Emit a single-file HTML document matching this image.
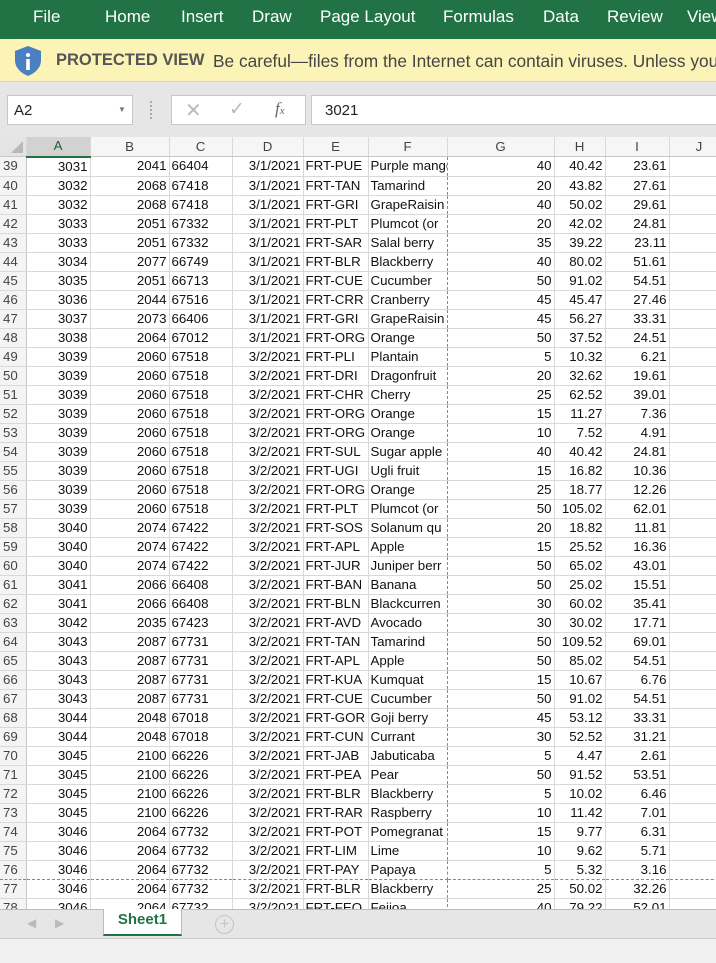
<!DOCTYPE html>
<html><head><meta charset="utf-8"><style>
*{margin:0;padding:0;box-sizing:border-box}
body{width:716px;height:963px;overflow:hidden;background:#e6e6e6;font-family:"Liberation Sans",sans-serif;position:relative}
#rib{position:absolute;left:0;top:0;width:716px;height:39px;background:#217346;color:#fff;font-size:17px}
#rib span{position:absolute;top:7px;white-space:nowrap}
#pv{position:absolute;left:0;top:39px;width:716px;height:43px;background:#fcf4b6;border-bottom:1px solid #e0d8a0;font-size:17.3px;color:#444;white-space:nowrap;overflow:hidden}
#pv b{position:absolute;left:56px;top:12px;font-weight:bold;color:#555;font-size:16.5px}
#pv span{position:absolute;left:213px;top:12px}
.box{position:absolute;background:#fff;border:1px solid #c6c6c6;top:95px;height:30px}
#grid{position:absolute;left:0;top:137px;width:716px;height:772px;overflow:hidden;background:#fff}
table{border-collapse:collapse;table-layout:fixed;font-size:13.3px;color:#111;width:729px}
td{height:19px;border-right:1px solid #d9d9d9;border-bottom:1px solid #d9d9d9;white-space:nowrap;overflow:hidden;padding:0 2px;text-align:right;line-height:18px}
td.l{text-align:left}
td.h{background:#f4f4f4;color:#444;text-align:left;padding-left:3px;border-right:1px solid #c8c8c8}
tr.hd td{background:#f6f6f6;text-align:center;color:#444;height:19px;border-bottom:1px solid #c8c8c8}
td.f{border-right:1px dashed #888}
tr.pb td{border-bottom:1px dashed #888}
#tabs{position:absolute;left:0;top:909px;width:716px;height:29px;background:#e6e6e6;border-top:1px solid #bbb}
#bot{position:absolute;left:0;top:938px;width:716px;height:25px;background:#f0f0f0;border-top:1px solid #c8c8c8}
</style></head><body>
<div id="rib"><span style="left:33px">File</span><span style="left:105px">Home</span><span style="left:181px">Insert</span><span style="left:252px">Draw</span><span style="left:320px">Page Layout</span><span style="left:443px">Formulas</span><span style="left:543px">Data</span><span style="left:607px">Review</span><span style="left:687px">View</span></div>
<div id="pv"><svg style="position:absolute;left:13px;top:6px" width="30" height="32" viewBox="0 0 30 32"><path d="M15 1 L28 6 V15 C28 23 22 28 15 31 C8 28 2 23 2 15 V6 Z" fill="#4a7fc1"/><circle cx="15" cy="10" r="2" fill="#fff"/><rect x="13.2" y="14" width="3.6" height="11" fill="#fff"/></svg><b>PROTECTED VIEW</b><span>Be careful—files from the Internet can contain viruses. Unless you</span></div>
<div class="box" style="left:7px;width:126px"><span style="position:absolute;left:6px;top:6px;font-size:15px;color:#222">A2</span><span style="position:absolute;left:110px;top:9px;font-size:8px;color:#777">▼</span></div>
<div style="position:absolute;left:150px;top:101px;width:2px;height:18px;border-left:2px dotted #aaa"></div>
<div class="box" style="left:171px;width:135px"><span style="position:absolute;left:13px;top:2px;font-size:20px;color:#bbb">✕</span><span style="position:absolute;left:57px;top:2px;font-size:19px;color:#bbb">✓</span><span style="position:absolute;left:103px;top:3px;font-size:17px;color:#666;font-style:italic;font-family:'Liberation Serif',serif">f<small style="font-size:11px">x</small></span></div>
<div class="box" style="left:311px;width:410px"><span style="position:absolute;left:13px;top:6px;font-size:15px;color:#222">3021</span></div>
<div id="grid"><table>
<colgroup><col style="width:26px"><col style="width:64px"><col style="width:79px"><col style="width:63px"><col style="width:71px"><col style="width:65px"><col style="width:79px"><col style="width:107px"><col style="width:51px"><col style="width:64px"><col style="width:60px"></colgroup>
<tr class="hd"><td style="background:#e4e4e4"><svg width="14" height="14" style="position:relative;top:3px;left:4px"><path d="M13 1V13H1Z" fill="#b8b8b8"/></svg></td><td style="background:#d2d2d2;border-bottom:2px solid #217346;color:#1e5e38">A</td><td>B</td><td>C</td><td>D</td><td>E</td><td>F</td><td>G</td><td>H</td><td>I</td><td>J</td></tr>
<tr><td class="h">39</td><td>3031</td><td>2041</td><td class="l">66404</td><td>3/1/2021</td><td class="l">FRT-PUE</td><td class="l f">Purple mango</td><td>40</td><td>40.42</td><td>23.61</td><td></td></tr>
<tr><td class="h">40</td><td>3032</td><td>2068</td><td class="l">67418</td><td>3/1/2021</td><td class="l">FRT-TAN</td><td class="l f">Tamarind</td><td>20</td><td>43.82</td><td>27.61</td><td></td></tr>
<tr><td class="h">41</td><td>3032</td><td>2068</td><td class="l">67418</td><td>3/1/2021</td><td class="l">FRT-GRI</td><td class="l f">GrapeRaisin</td><td>40</td><td>50.02</td><td>29.61</td><td></td></tr>
<tr><td class="h">42</td><td>3033</td><td>2051</td><td class="l">67332</td><td>3/1/2021</td><td class="l">FRT-PLT</td><td class="l f">Plumcot (or</td><td>20</td><td>42.02</td><td>24.81</td><td></td></tr>
<tr><td class="h">43</td><td>3033</td><td>2051</td><td class="l">67332</td><td>3/1/2021</td><td class="l">FRT-SAR</td><td class="l f">Salal berry</td><td>35</td><td>39.22</td><td>23.11</td><td></td></tr>
<tr><td class="h">44</td><td>3034</td><td>2077</td><td class="l">66749</td><td>3/1/2021</td><td class="l">FRT-BLR</td><td class="l f">Blackberry</td><td>40</td><td>80.02</td><td>51.61</td><td></td></tr>
<tr><td class="h">45</td><td>3035</td><td>2051</td><td class="l">66713</td><td>3/1/2021</td><td class="l">FRT-CUE</td><td class="l f">Cucumber</td><td>50</td><td>91.02</td><td>54.51</td><td></td></tr>
<tr><td class="h">46</td><td>3036</td><td>2044</td><td class="l">67516</td><td>3/1/2021</td><td class="l">FRT-CRR</td><td class="l f">Cranberry</td><td>45</td><td>45.47</td><td>27.46</td><td></td></tr>
<tr><td class="h">47</td><td>3037</td><td>2073</td><td class="l">66406</td><td>3/1/2021</td><td class="l">FRT-GRI</td><td class="l f">GrapeRaisin</td><td>45</td><td>56.27</td><td>33.31</td><td></td></tr>
<tr><td class="h">48</td><td>3038</td><td>2064</td><td class="l">67012</td><td>3/1/2021</td><td class="l">FRT-ORG</td><td class="l f">Orange</td><td>50</td><td>37.52</td><td>24.51</td><td></td></tr>
<tr><td class="h">49</td><td>3039</td><td>2060</td><td class="l">67518</td><td>3/2/2021</td><td class="l">FRT-PLI</td><td class="l f">Plantain</td><td>5</td><td>10.32</td><td>6.21</td><td></td></tr>
<tr><td class="h">50</td><td>3039</td><td>2060</td><td class="l">67518</td><td>3/2/2021</td><td class="l">FRT-DRI</td><td class="l f">Dragonfruit</td><td>20</td><td>32.62</td><td>19.61</td><td></td></tr>
<tr><td class="h">51</td><td>3039</td><td>2060</td><td class="l">67518</td><td>3/2/2021</td><td class="l">FRT-CHR</td><td class="l f">Cherry</td><td>25</td><td>62.52</td><td>39.01</td><td></td></tr>
<tr><td class="h">52</td><td>3039</td><td>2060</td><td class="l">67518</td><td>3/2/2021</td><td class="l">FRT-ORG</td><td class="l f">Orange</td><td>15</td><td>11.27</td><td>7.36</td><td></td></tr>
<tr><td class="h">53</td><td>3039</td><td>2060</td><td class="l">67518</td><td>3/2/2021</td><td class="l">FRT-ORG</td><td class="l f">Orange</td><td>10</td><td>7.52</td><td>4.91</td><td></td></tr>
<tr><td class="h">54</td><td>3039</td><td>2060</td><td class="l">67518</td><td>3/2/2021</td><td class="l">FRT-SUL</td><td class="l f">Sugar apple</td><td>40</td><td>40.42</td><td>24.81</td><td></td></tr>
<tr><td class="h">55</td><td>3039</td><td>2060</td><td class="l">67518</td><td>3/2/2021</td><td class="l">FRT-UGI</td><td class="l f">Ugli fruit</td><td>15</td><td>16.82</td><td>10.36</td><td></td></tr>
<tr><td class="h">56</td><td>3039</td><td>2060</td><td class="l">67518</td><td>3/2/2021</td><td class="l">FRT-ORG</td><td class="l f">Orange</td><td>25</td><td>18.77</td><td>12.26</td><td></td></tr>
<tr><td class="h">57</td><td>3039</td><td>2060</td><td class="l">67518</td><td>3/2/2021</td><td class="l">FRT-PLT</td><td class="l f">Plumcot (or</td><td>50</td><td>105.02</td><td>62.01</td><td></td></tr>
<tr><td class="h">58</td><td>3040</td><td>2074</td><td class="l">67422</td><td>3/2/2021</td><td class="l">FRT-SOS</td><td class="l f">Solanum qu</td><td>20</td><td>18.82</td><td>11.81</td><td></td></tr>
<tr><td class="h">59</td><td>3040</td><td>2074</td><td class="l">67422</td><td>3/2/2021</td><td class="l">FRT-APL</td><td class="l f">Apple</td><td>15</td><td>25.52</td><td>16.36</td><td></td></tr>
<tr><td class="h">60</td><td>3040</td><td>2074</td><td class="l">67422</td><td>3/2/2021</td><td class="l">FRT-JUR</td><td class="l f">Juniper berr</td><td>50</td><td>65.02</td><td>43.01</td><td></td></tr>
<tr><td class="h">61</td><td>3041</td><td>2066</td><td class="l">66408</td><td>3/2/2021</td><td class="l">FRT-BAN</td><td class="l f">Banana</td><td>50</td><td>25.02</td><td>15.51</td><td></td></tr>
<tr><td class="h">62</td><td>3041</td><td>2066</td><td class="l">66408</td><td>3/2/2021</td><td class="l">FRT-BLN</td><td class="l f">Blackcurren</td><td>30</td><td>60.02</td><td>35.41</td><td></td></tr>
<tr><td class="h">63</td><td>3042</td><td>2035</td><td class="l">67423</td><td>3/2/2021</td><td class="l">FRT-AVD</td><td class="l f">Avocado</td><td>30</td><td>30.02</td><td>17.71</td><td></td></tr>
<tr><td class="h">64</td><td>3043</td><td>2087</td><td class="l">67731</td><td>3/2/2021</td><td class="l">FRT-TAN</td><td class="l f">Tamarind</td><td>50</td><td>109.52</td><td>69.01</td><td></td></tr>
<tr><td class="h">65</td><td>3043</td><td>2087</td><td class="l">67731</td><td>3/2/2021</td><td class="l">FRT-APL</td><td class="l f">Apple</td><td>50</td><td>85.02</td><td>54.51</td><td></td></tr>
<tr><td class="h">66</td><td>3043</td><td>2087</td><td class="l">67731</td><td>3/2/2021</td><td class="l">FRT-KUA</td><td class="l f">Kumquat</td><td>15</td><td>10.67</td><td>6.76</td><td></td></tr>
<tr><td class="h">67</td><td>3043</td><td>2087</td><td class="l">67731</td><td>3/2/2021</td><td class="l">FRT-CUE</td><td class="l f">Cucumber</td><td>50</td><td>91.02</td><td>54.51</td><td></td></tr>
<tr><td class="h">68</td><td>3044</td><td>2048</td><td class="l">67018</td><td>3/2/2021</td><td class="l">FRT-GOR</td><td class="l f">Goji berry</td><td>45</td><td>53.12</td><td>33.31</td><td></td></tr>
<tr><td class="h">69</td><td>3044</td><td>2048</td><td class="l">67018</td><td>3/2/2021</td><td class="l">FRT-CUN</td><td class="l f">Currant</td><td>30</td><td>52.52</td><td>31.21</td><td></td></tr>
<tr><td class="h">70</td><td>3045</td><td>2100</td><td class="l">66226</td><td>3/2/2021</td><td class="l">FRT-JAB</td><td class="l f">Jabuticaba</td><td>5</td><td>4.47</td><td>2.61</td><td></td></tr>
<tr><td class="h">71</td><td>3045</td><td>2100</td><td class="l">66226</td><td>3/2/2021</td><td class="l">FRT-PEA</td><td class="l f">Pear</td><td>50</td><td>91.52</td><td>53.51</td><td></td></tr>
<tr><td class="h">72</td><td>3045</td><td>2100</td><td class="l">66226</td><td>3/2/2021</td><td class="l">FRT-BLR</td><td class="l f">Blackberry</td><td>5</td><td>10.02</td><td>6.46</td><td></td></tr>
<tr><td class="h">73</td><td>3045</td><td>2100</td><td class="l">66226</td><td>3/2/2021</td><td class="l">FRT-RAR</td><td class="l f">Raspberry</td><td>10</td><td>11.42</td><td>7.01</td><td></td></tr>
<tr><td class="h">74</td><td>3046</td><td>2064</td><td class="l">67732</td><td>3/2/2021</td><td class="l">FRT-POT</td><td class="l f">Pomegranat</td><td>15</td><td>9.77</td><td>6.31</td><td></td></tr>
<tr><td class="h">75</td><td>3046</td><td>2064</td><td class="l">67732</td><td>3/2/2021</td><td class="l">FRT-LIM</td><td class="l f">Lime</td><td>10</td><td>9.62</td><td>5.71</td><td></td></tr>
<tr class="pb"><td class="h">76</td><td>3046</td><td>2064</td><td class="l">67732</td><td>3/2/2021</td><td class="l">FRT-PAY</td><td class="l f">Papaya</td><td>5</td><td>5.32</td><td>3.16</td><td></td></tr>
<tr><td class="h">77</td><td>3046</td><td>2064</td><td class="l">67732</td><td>3/2/2021</td><td class="l">FRT-BLR</td><td class="l f">Blackberry</td><td>25</td><td>50.02</td><td>32.26</td><td></td></tr>
<tr><td class="h">78</td><td>3046</td><td>2064</td><td class="l">67732</td><td>3/2/2021</td><td class="l">FRT-FEO</td><td class="l f">Feijoa</td><td>40</td><td>79.22</td><td>52.01</td><td></td></tr>
</table></div>
<div id="tabs">
<span style="position:absolute;left:27px;top:6px;color:#bbb;font-size:12px">◀</span>
<span style="position:absolute;left:55px;top:6px;color:#bbb;font-size:12px">▶</span>
<div style="position:absolute;left:103px;top:-1px;width:79px;height:27px;background:#fff;border:1px solid #bbb;border-top:none;border-bottom:2px solid #217346;color:#217346;font-weight:bold;font-size:15px;text-align:center;line-height:22px">Sheet1</div>
<div style="position:absolute;left:215px;top:5px;width:19px;height:19px;border:1px solid #c4c4c4;border-radius:50%;color:#c4c4c4;text-align:center;line-height:17px;font-size:16px">+</div>
</div>
<div id="bot"></div>
</body></html>
